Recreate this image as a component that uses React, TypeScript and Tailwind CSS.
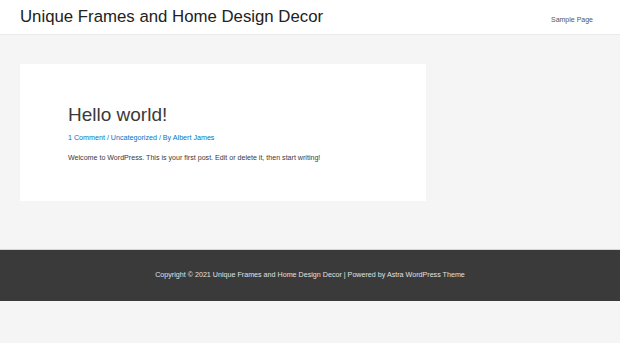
export default function App() {
  return (
    <div className="min-h-screen bg-[#f5f5f5] font-['Liberation_Sans',Arial,sans-serif] text-[#3a3a3a]">
      <header className="flex h-[35px] items-center justify-between border-b border-[#eaeaea] bg-white pl-[20px] pr-[27px]">
        <a className="text-[16.8px] leading-none text-[#222]">Unique Frames and Home Design Decor</a>
        <nav>
          <a className="text-[7px] leading-none text-[#555]">Sample Page</a>
        </nav>
      </header>

      <main className="px-[20px] pb-[48px] pt-[29px]">
        <article className="h-[137px] w-[406px] bg-white pl-[48px] pt-[41px]">
          <h1 className="text-[19px] leading-[20px] text-[#3a3a3a]">Hello world!</h1>
          <div className="mt-[9px] text-[7.15px] leading-[8px] text-[#0274be]">
            1 Comment / Uncategorized / By Albert James
          </div>
          <p className="mt-[12px] text-[7.1px] leading-[8px] text-[#3a3a3a]">
            Welcome to WordPress. This is your first post. Edit or delete it, then start writing!
          </p>
        </article>
      </main>

      <footer className="flex h-[52px] items-center justify-center border-t border-[#d4d4d4] bg-[#3a3a3a]">
        <p className="text-[7.15px] leading-none text-[#e0e0e0]">
          Copyright © 2021 Unique Frames and Home Design Decor | Powered by Astra WordPress Theme
        </p>
      </footer>
    </div>
  );
}
